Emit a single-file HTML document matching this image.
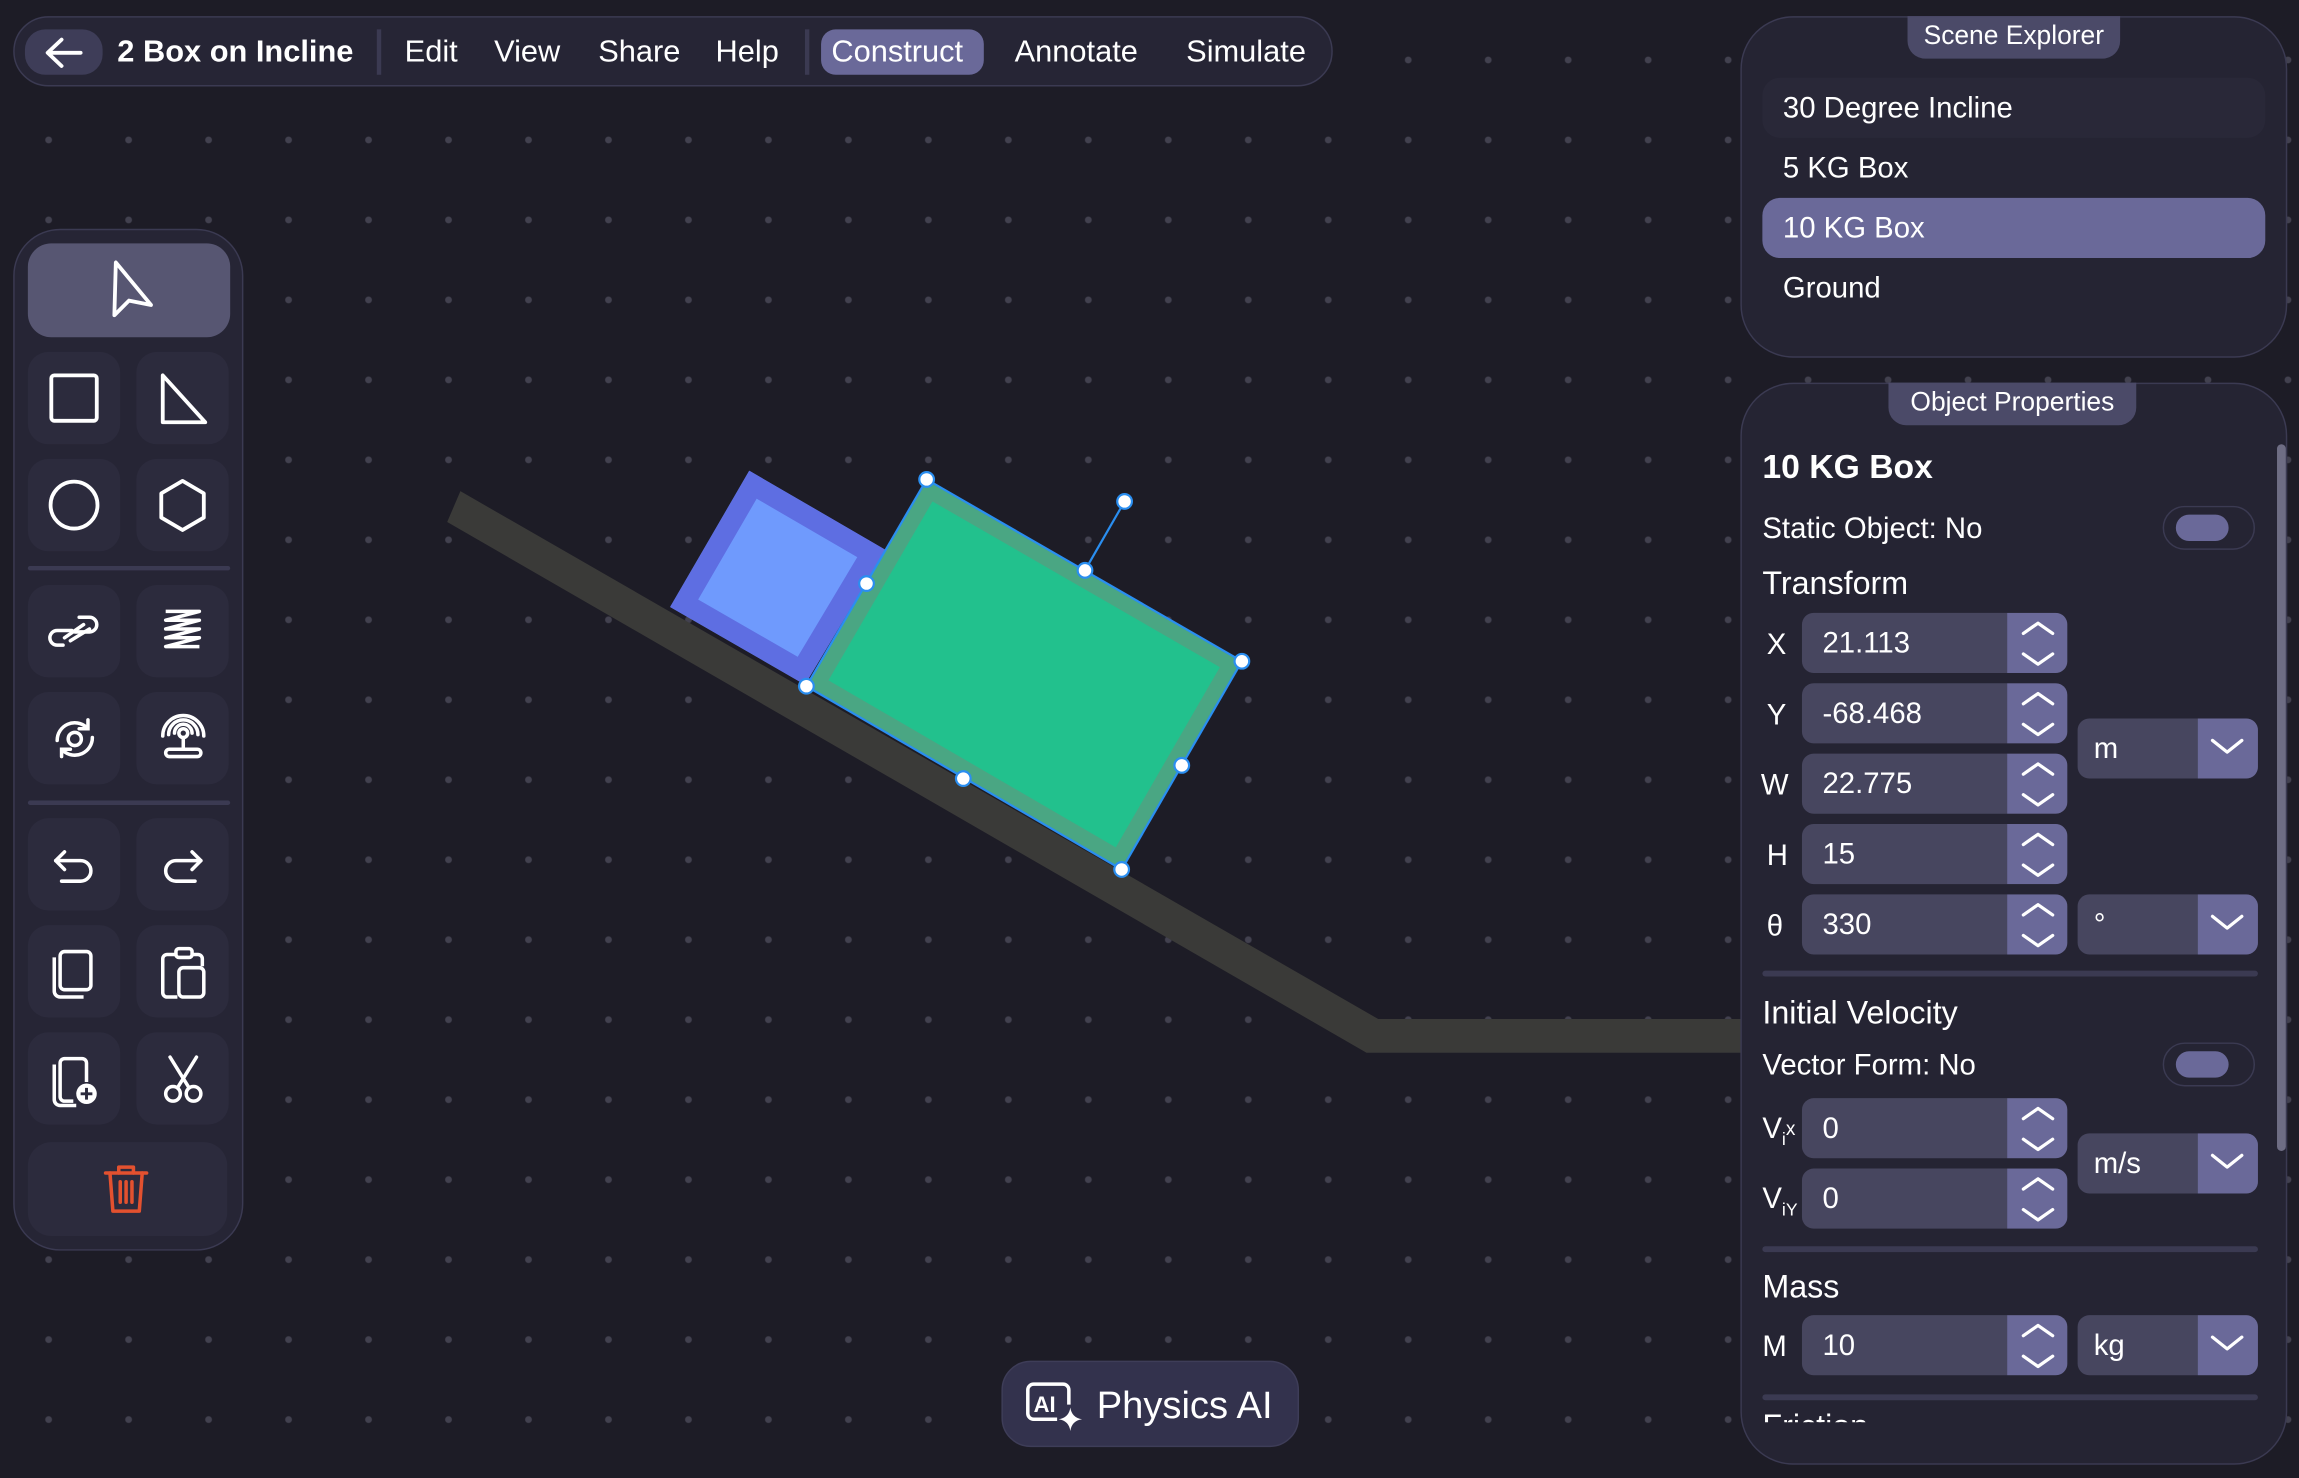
<!DOCTYPE html>
<html><head><meta charset="utf-8">
<style>
html,body{margin:0;padding:0;width:2299px;height:1478px;overflow:hidden;background:#1d1c26;}
#s{position:absolute;left:0;top:0;width:1568px;height:1008px;transform:scale(1.46620);transform-origin:0 0;
font-family:"Liberation Sans",sans-serif;color:#fff;
background-color:#1d1c26;
background-image:radial-gradient(circle,#42414f 2px,transparent 2.6px);
background-size:54.56px 54.56px;background-position:5.9px 68.2px;}
.a{position:absolute;}
.bar{left:9px;top:11px;width:898px;height:46px;border:1.5px solid #3b3a52;border-radius:24px;background:#262535;}
.mi{position:absolute;top:12px;font-size:21px;line-height:24px;}
.tb{left:9px;top:156px;width:155px;height:695px;border:1.5px solid #3b3a52;border-radius:32px;background:#262535;}
.btn{position:absolute;width:63px;height:63px;border-radius:14px;background:#2c2b3d;}
.btn svg{position:absolute;left:0;top:0}
.panel{border:1.5px solid #3b3a52;border-radius:36px;background:#252433;}
.tab{position:absolute;height:29px;background:#4b4a68;border-radius:0 0 12px 12px;font-size:18px;line-height:27px;text-align:center;}
.it{position:absolute;left:1202px;width:343px;height:41px;border-radius:12px;font-size:20px;line-height:43px;padding-left:14px;box-sizing:border-box;}
.lbl{position:absolute;font-size:20px;}
.inp{position:absolute;left:1229px;width:181px;height:41px;border-radius:8px;background:#47465f;overflow:hidden;}
.inp span{position:absolute;left:14px;top:1px;line-height:41px;font-size:20px;}
.inp i{position:absolute;right:0;top:0;width:41px;height:41px;background:#6a6999;}
.dd{position:absolute;left:1417px;width:123px;height:41px;border-radius:8px;background:#47465f;overflow:hidden;}
.dd span{position:absolute;left:11px;top:1px;line-height:41px;font-size:20px;}
.dd i{position:absolute;right:0;top:0;width:41px;height:41px;background:#6a6999;}
.sep{position:absolute;left:1202px;width:338px;height:4px;border-radius:2px;background:#3b3a52;}
.tog{position:absolute;left:1475px;width:63px;height:30px;border:1.5px solid #3b3a52;border-radius:16px;box-sizing:border-box;}
.tog b{position:absolute;left:8px;top:5px;width:36px;height:18px;border-radius:9px;background:#6a6999;}
</style></head><body><div id="s">

<svg class="a" style="left:0;top:0" width="1568" height="1008">
<defs>
<clipPath id="cb"><polygon points="511,321 604,375 549,467 457,414"/></clipPath>
<clipPath id="cg"><polygon points="632,327 847,451 765,593 550,468"/></clipPath>
</defs>
<polygon points="314,335 940,695 1190,695 1190,718 932,718 305,356" fill="#3a3a38"/>
<polygon points="511,321 604,375 549,467 457,414" fill="#6f9afd" stroke="#5e6ee2" stroke-width="28" clip-path="url(#cb)"/>
<polygon points="632,327 847,451 765,593 550,468" fill="#22c18d" stroke="#4aa683" stroke-width="22" clip-path="url(#cg)"/>
<polygon points="632,327 847,451 765,593 550,468" fill="none" stroke="#2a8ef0" stroke-width="1.5"/>
<line x1="740" y1="389" x2="767" y2="342" stroke="#2a8ef0" stroke-width="1.5"/>
<g fill="#fff" stroke="#2a8ef0" stroke-width="1.5">
<circle cx="632" cy="327" r="5"/><circle cx="847" cy="451" r="5"/><circle cx="765" cy="593" r="5"/><circle cx="550" cy="468" r="5"/>
<circle cx="591" cy="398" r="5"/><circle cx="740" cy="389" r="5"/><circle cx="806" cy="522" r="5"/><circle cx="657" cy="531" r="5"/>
<circle cx="767" cy="342" r="5"/>
</g>
</svg>

<div class="a bar"></div>
<div class="a" style="left:17px;top:20px;width:53px;height:31px;border-radius:14px;background:#3e3d58;"></div>
<svg class="a" style="left:28px;top:24px" width="30" height="24"><path d="M27 12H5M14 3 4.5 12 14 21" fill="none" stroke="#fff" stroke-width="2.6" stroke-linecap="round" stroke-linejoin="round"/></svg>
<div class="mi" style="left:80px;top:24px;font-weight:bold;">2 Box on Incline</div>
<div class="a" style="left:257px;top:20px;width:3px;height:31px;background:#3b3a52;"></div>
<div class="mi" style="left:276px;top:24px;">Edit</div>
<div class="mi" style="left:337px;top:24px;">View</div>
<div class="mi" style="left:408px;top:24px;">Share</div>
<div class="mi" style="left:488px;top:24px;">Help</div>
<div class="a" style="left:549px;top:20px;width:3px;height:31px;background:#3b3a52;"></div>
<div class="a" style="left:560px;top:20px;width:111px;height:31px;border-radius:10px;background:#6a6999;"></div>
<div class="mi" style="left:567px;top:24px;">Construct</div>
<div class="mi" style="left:692px;top:24px;">Annotate</div>
<div class="mi" style="left:809px;top:24px;">Simulate</div>

<div class="a tb"></div>
<div class="btn" style="left:19px;top:166px;width:138px;height:64px;border-radius:16px;background:#575672;">
<svg width="138" height="64"><path d="M60 13 L59 49 L69 39 L84 42 Z" fill="none" stroke="#fff" stroke-width="2.6" stroke-linejoin="round"/></svg></div>
<div class="btn" style="left:19px;top:240px"><svg width="63" height="63"><rect x="16" y="16" width="31" height="31" rx="2" fill="none" stroke="#fff" stroke-width="2.6"/></svg></div>
<div class="btn" style="left:93px;top:240px"><svg width="63" height="63"><path d="M18 16V48H47Z" fill="none" stroke="#fff" stroke-width="2.6" stroke-linejoin="round"/></svg></div>
<div class="btn" style="left:19px;top:313px"><svg width="63" height="63"><circle cx="31.5" cy="31.5" r="16" fill="none" stroke="#fff" stroke-width="2.6"/></svg></div>
<div class="btn" style="left:93px;top:313px"><svg width="63" height="63"><path d="M31.5 15 46 23.5V40L31.5 48.5 17 40V23.5Z" fill="none" stroke="#fff" stroke-width="2.6" stroke-linejoin="round"/></svg></div>
<div class="a" style="left:19px;top:386px;width:138px;height:3px;background:#3b3a52;border-radius:2px"></div>
<div class="btn" style="left:19px;top:399px"><svg width="63" height="63"><g fill="none" stroke="#fff" stroke-width="2.4" stroke-linecap="round"><path d="M24 41 H20 a5 5 0 0 1 0 -10 H30"/><path d="M35 22 H42 a5 5 0 0 1 0 10 H32"/><path d="M25 36 L38 27"/><path d="M29 38 L42 30"/></g></svg></div>
<div class="btn" style="left:93px;top:399px"><svg width="63" height="63"><path d="M20 18H43L20 24H43L20 30H43L20 36H43L20 42H43" fill="none" stroke="#fff" stroke-width="2.4" stroke-linejoin="round"/></svg></div>
<div class="btn" style="left:19px;top:472px"><svg width="63" height="63"><g fill="none" stroke="#fff" stroke-width="2.4" stroke-linecap="round"><circle cx="32" cy="32" r="4.5"/><path d="M20 33a12 12 0 0 1 20 -9"/><path d="M44 31a12 12 0 0 1 -20 9"/><path d="M41 19v6h-6"/><path d="M23 44v-5h6"/></g></svg></div>
<div class="btn" style="left:93px;top:472px"><svg width="63" height="63"><g fill="none" stroke="#fff" stroke-width="2.4" stroke-linecap="round"><circle cx="32" cy="28" r="3"/><path d="M26 28a6 6 0 0 1 12 0"/><path d="M22 29a10 10 0 0 1 20 0"/><path d="M18 30a14 14 0 0 1 28 0"/><path d="M32 31v8"/><rect x="20" y="39" width="24" height="5" rx="2.5"/></g></svg></div>
<div class="a" style="left:19px;top:546px;width:138px;height:3px;background:#3b3a52;border-radius:2px"></div>
<div class="btn" style="left:19px;top:558px"><svg width="63" height="63"><g fill="none" stroke="#fff" stroke-width="2.4" stroke-linecap="round" stroke-linejoin="round"><path d="M25 23 19 29 25 35"/><path d="M19 29H36a7 7 0 0 1 0 14H23"/></g></svg></div>
<div class="btn" style="left:93px;top:558px"><svg width="63" height="63"><g fill="none" stroke="#fff" stroke-width="2.4" stroke-linecap="round" stroke-linejoin="round"><path d="M38 23 44 29 38 35"/><path d="M44 29H27a7 7 0 0 0 0 14H40"/></g></svg></div>
<div class="btn" style="left:19px;top:631px"><svg width="63" height="63"><g fill="none" stroke="#fff" stroke-width="2.4" stroke-linejoin="round"><rect x="22" y="18" width="21" height="26" rx="3"/><path d="M18 22V45a4 4 0 0 0 4 4H38"/></g></svg></div>
<div class="btn" style="left:93px;top:631px"><svg width="63" height="63"><g fill="none" stroke="#fff" stroke-width="2.4" stroke-linejoin="round"><path d="M27 20H21a3 3 0 0 0 -3 3V46a3 3 0 0 0 3 3H28"/><path d="M38 20H42a3 3 0 0 1 3 3V28"/><rect x="27" y="16" width="11" height="6" rx="2"/><rect x="29" y="29" width="17" height="20" rx="3"/></g></svg></div>
<div class="btn" style="left:19px;top:704px"><svg width="63" height="63"><g fill="none" stroke="#fff" stroke-width="2.4" stroke-linejoin="round"><path d="M40 34V21a3 3 0 0 0 -3 -3H25a3 3 0 0 0 -3 3V44a3 3 0 0 0 3 3H31"/><path d="M18 22V46a4 4 0 0 0 4 4H33"/></g><circle cx="40" cy="42" r="7" fill="#fff"/><path d="M40 38V46M36 42H44" stroke="#2c2b3d" stroke-width="2"/></svg></div>
<div class="btn" style="left:93px;top:704px"><svg width="63" height="63"><g fill="none" stroke="#fff" stroke-width="2.4" stroke-linecap="round"><path d="M23 17 36 38"/><path d="M41 17 28 38"/><circle cx="25" cy="42" r="5"/><circle cx="39" cy="42" r="5"/></g></svg></div>
<div class="btn" style="left:19px;top:779px;width:136px;height:64px;border-radius:16px;"><svg width="136" height="64"><g fill="none" stroke="#e3512f" stroke-width="2.4" stroke-linecap="round" stroke-linejoin="round"><path d="M53 21H81"/><path d="M62 21V17H72V21"/><path d="M56 21 58 47H76L78 21"/><path d="M63 27V41M67 27V41M71 27V41"/></g></svg></div>

<div class="a" style="left:683px;top:928px;width:201px;height:57px;border:1.5px solid #3e3d58;border-radius:20px;background:#33324d;"></div>
<svg class="a" style="left:697px;top:940px" width="44" height="36"><g fill="none" stroke="#fff" stroke-width="2.4" stroke-linejoin="round"><path d="M24 28H8a4 4 0 0 1 -4 -4V8a4 4 0 0 1 4 -4H28a4 4 0 0 1 4 4V18"/></g><text x="8" y="23" font-family="Liberation Sans" font-size="15" font-weight="bold" fill="#fff">AI</text><path d="M33 20Q34 27 41 28 34 29 33 36 32 29 25 28 32 27 33 20Z" fill="#fff"/></svg>
<div class="a" style="left:748px;top:943px;font-size:26px;line-height:30px;">Physics AI</div>

<div class="a panel" style="left:1187px;top:11px;width:371px;height:231px;"></div>
<div class="tab" style="left:1301px;top:11px;width:145px;">Scene Explorer</div>
<div class="it" style="top:53px;background:#292838;">30 Degree Incline</div>
<div class="it" style="top:94px;">5 KG Box</div>
<div class="it" style="top:135px;background:#6a6999;">10 KG Box</div>
<div class="it" style="top:176px;">Ground</div>

<div class="a panel" style="left:1187px;top:261px;width:371px;height:736px;"></div>
<div class="tab" style="left:1288px;top:261px;width:169px;">Object Properties</div>
<div class="a" style="left:1553px;top:303px;width:6px;height:482px;border-radius:3px;background:#6e6d84;"></div>
<div class="lbl" style="left:1202px;top:305px;font-size:23px;font-weight:bold;">10 KG Box</div>
<div class="lbl" style="left:1202px;top:350px;">Static Object: No</div>
<div class="tog" style="top:345px"><b></b></div>
<div class="lbl" style="left:1202px;top:385px;font-size:22px;">Transform</div>

<div class="lbl" style="left:1205px;top:429px;">X</div>
<div class="inp" style="top:418px"><span>21.113</span><i></i></div>
<div class="lbl" style="left:1205px;top:477px;">Y</div>
<div class="inp" style="top:466px"><span>-68.468</span><i></i></div>
<div class="lbl" style="left:1201px;top:525px;">W</div>
<div class="inp" style="top:514px"><span>22.775</span><i></i></div>
<div class="lbl" style="left:1205px;top:573px;">H</div>
<div class="inp" style="top:562px"><span>15</span><i></i></div>
<div class="lbl" style="left:1205px;top:621px;">θ</div>
<div class="inp" style="top:610px"><span>330</span><i></i></div>
<div class="dd" style="top:490px"><span>m</span><i></i></div>
<div class="dd" style="top:610px"><span>°</span><i></i></div>
<div class="sep" style="top:662px"></div>
<div class="lbl" style="left:1202px;top:678px;font-size:22px;">Initial Velocity</div>
<div class="lbl" style="left:1202px;top:716px;">Vector Form: No</div>
<div class="tog" style="top:711px"><b></b></div>
<div class="lbl" style="left:1202px;top:759px;">V<sub style="font-size:12px">i</sub><span style="font-size:13px;position:relative;top:-2px">x</span></div>
<div class="inp" style="top:749px"><span>0</span><i></i></div>
<div class="lbl" style="left:1202px;top:807px;">V<sub style="font-size:12px">iY</sub></div>
<div class="inp" style="top:797px"><span>0</span><i></i></div>
<div class="dd" style="top:773px"><span>m/s</span><i></i></div>
<div class="sep" style="top:850px"></div>
<div class="lbl" style="left:1202px;top:865px;font-size:22px;">Mass</div>
<div class="lbl" style="left:1202px;top:908px;">M</div>
<div class="inp" style="top:897px"><span>10</span><i></i></div>
<div class="dd" style="top:897px"><span>kg</span><i></i></div>
<div class="sep" style="top:951px"></div>
<div class="a" style="left:1202px;top:962px;width:100px;height:8px;overflow:hidden;"><div style="font-size:22px;line-height:22px;">Friction</div></div>

<svg class="a" style="left:0;top:0;pointer-events:none" width="1568" height="1008"><g fill="none" stroke="#fff" stroke-width="2.2" stroke-linecap="round" stroke-linejoin="round">
<path d="M1380 432l10-7 10 7M1380 446l10 7 10-7"/>
<path d="M1380 480l10-7 10 7M1380 494l10 7 10-7"/>
<path d="M1380 528l10-7 10 7M1380 542l10 7 10-7"/>
<path d="M1380 576l10-7 10 7M1380 590l10 7 10-7"/>
<path d="M1380 624l10-7 10 7M1380 638l10 7 10-7"/>
<path d="M1380 763l10-7 10 7M1380 777l10 7 10-7"/>
<path d="M1380 811l10-7 10 7M1380 825l10 7 10-7"/>
<path d="M1380 911l10-7 10 7M1380 925l10 7 10-7"/>
<path d="M1509 505l10 8 10-8M1509 625l10 8 10-8M1509 788l10 8 10-8M1509 912l10 8 10-8"/>
</g></svg>
</div></body></html>
